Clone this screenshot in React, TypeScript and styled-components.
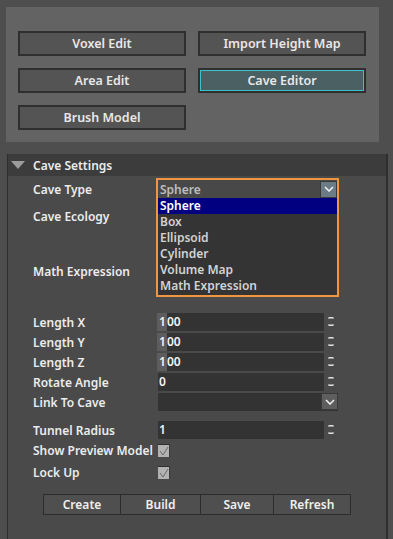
import { createGlobalStyle } from 'styled-components'
import styled from 'styled-components'

const GlobalStyle = createGlobalStyle`
    html, body {
        margin: 0;
        padding: 0;
        background: #4e4e4e;
    }
    body {
        font-family: "Noto Sans", "DejaVu Sans", sans-serif;
        font-size: 12px;
        color: #e6e6e6;
    }
`

const Page = styled.div`
    width: 393px;
    height: 539px;
    overflow: hidden;
    box-sizing: border-box;
    padding: 7px 0 0 6px;
`

const TopPanel = styled.div`
    width: 373px;
    height: 135px;
    box-sizing: border-box;
    padding: 24px 0 0 12px;
    background: #636363;
`

const ButtonGrid = styled.div`
    display: grid;
    grid-template-columns: 168px 168px;
    grid-auto-rows: 25px;
    column-gap: 12px;
    row-gap: 12px;
`

const ToolButton = styled.button<{ $active?: boolean }>`
    box-sizing: border-box;
    margin: 0;
    padding: 0;
    font-family: inherit;
    font-size: 12.5px;
    font-weight: 600;
    color: #e8e8e8;
    background: ${p => (p.$active ? '#4a6062' : '#545454')};
    border: 2px solid #2f2f2f;
    box-shadow: ${p => (p.$active ? 'inset 0 0 0 1px #3ac3c8' : 'none')};
    cursor: pointer;
`

const Section = styled.div`
    margin: 12px 0 0 1px;
    width: 381px;
    height: 385px;
    box-sizing: border-box;
    background: #4a4a4a;
    border-left: 1px solid #2e2e2e;
    border-right: 2px solid #2e2e2e;
`

const SectionHeader = styled.div`
    height: 22px;
    display: flex;
    align-items: center;
    gap: 8px;
    padding-left: 3px;
    background: #3c3c3c;
    font-size: 12px;
    font-weight: 600;
    color: #ececec;
`

const SectionBody = styled.div`
    padding: 4px 0 0 25px;
`

const Row = styled.div<{ $h: number; $mt?: number }>`
    display: grid;
    grid-template-columns: 125px 180px;
    align-items: center;
    height: ${p => p.$h}px;
    margin-top: ${p => p.$mt ?? 0}px;
`

const Label = styled.div`
    font-size: 12px;
    font-weight: 600;
    color: #ececec;
    white-space: nowrap;
`

const Cell = styled.div`
    position: relative;
    height: 100%;
    display: flex;
    align-items: center;
`

const SpinBox = styled.div`
    display: flex;
    align-items: center;
    height: 18px;
    gap: 3px;
`

const Field = styled.div`
    width: 166px;
    height: 18px;
    box-sizing: border-box;
    padding-left: 1px;
    background: #333333;
    font-size: 12px;
    font-weight: 600;
    color: #f4f4f4;
    line-height: 18px;
`

const Caret = styled.span`
    display: inline-block;
    background: #5d5d5d;
    padding: 0 1px 0 2px;
    margin-left: -2px;
`

const Combo = styled.div`
    width: 180px;
    height: 18px;
    box-sizing: border-box;
    display: flex;
    justify-content: flex-end;
    background: #333333;
`

const ArrowBox = styled.div<{ $bg: string }>`
    width: 17px;
    height: 17px;
    box-sizing: border-box;
    display: flex;
    align-items: center;
    justify-content: center;
    background: ${p => p.$bg};
    border: 1px solid #3a3a3a;
`

const Popup = styled.div`
    position: absolute;
    top: -2px;
    left: -2px;
    width: 183px;
    height: 119px;
    box-sizing: border-box;
    border: 2px solid #f3953e;
    background: #343434;
    z-index: 2;
`

const PopupHead = styled.div`
    height: 18px;
    display: flex;
    align-items: center;
    justify-content: space-between;
    padding-left: 2px;
    background: #484848;
    font-size: 12px;
    font-weight: 600;
    color: #bdbdbd;
`

const Option = styled.div<{ $selected?: boolean }>`
    height: 16px;
    line-height: 16px;
    padding-left: 2px;
    font-size: 12px;
    font-weight: 600;
    color: ${p => (p.$selected ? '#ffffff' : '#d2d2d2')};
    background: ${p => (p.$selected ? '#000080' : 'transparent')};
`

const Check = styled.div`
    width: 12px;
    height: 13px;
    box-sizing: border-box;
    background: #b2b2b2;
    border-top: 1px solid #2e2e2e;
    border-right: 1px solid #3a3a3a;
    display: flex;
    align-items: center;
    justify-content: center;
`

const ActionBar = styled.div`
    display: flex;
    margin: 13px 0 0 10px;
    width: 308px;
    height: 21px;
    box-sizing: border-box;
    border: 1px solid #2c2c2c;
    background: #4f4f4f;
`

const ActionButton = styled.button<{ $w: number }>`
    width: ${p => p.$w}px;
    margin: 0;
    padding: 0;
    border: none;
    border-left: 1px solid #2c2c2c;
    background: transparent;
    font-family: inherit;
    font-size: 12px;
    font-weight: 600;
    color: #f0f0f0;
    &:first-child {
        border-left: none;
    }
`

function Chevron() {
    return (
        <svg width="10" height="6" viewBox="0 0 10 6">
            <path d="M1 1 L5 5 L9 1" fill="none" stroke="#f4f4f4" strokeWidth="1.5" />
        </svg>
    )
}

function Spinner() {
    return (
        <svg width="8" height="18" viewBox="0 0 8 18">
            <path d="M2 4 L6 4 L7 5 L1 5 Z" fill="#e0e0e0" />
            <path d="M1 12 L7 12 L6 13 L2 13 Z" fill="#e0e0e0" />
            <rect x="1" y="5" width="6" height="1" fill="#9a9a9a" />
            <rect x="1" y="11" width="6" height="1" fill="#9a9a9a" />
        </svg>
    )
}

function SpinField({ value, caret }: { value: string; caret?: boolean }) {
    return (
        <SpinBox>
            <Field>
                {caret ? (
                    <>
                        <Caret>{value[0]}</Caret>
                        {value.slice(1)}
                    </>
                ) : (
                    value
                )}
            </Field>
            <Spinner />
        </SpinBox>
    )
}

function CheckBox() {
    return (
        <Check>
            <svg width="10" height="10" viewBox="0 0 10 10">
                <path d="M1 5 L4 9 L9 1" fill="none" stroke="#6a6a6a" strokeWidth="1" />
            </svg>
        </Check>
    )
}

const CAVE_TYPES = ['Sphere', 'Box', 'Ellipsoid', 'Cylinder', 'Volume Map', 'Math Expression']

const ACTIONS: [string, number][] = [
    ['Create', 76],
    ['Build', 80],
    ['Save', 73],
    ['Refresh', 77],
]

export default function App() {
    return (
        <Page>
            <GlobalStyle />
            <TopPanel>
                <ButtonGrid>
                    <ToolButton>Voxel Edit</ToolButton>
                    <ToolButton>Import Height Map</ToolButton>
                    <ToolButton>Area Edit</ToolButton>
                    <ToolButton $active>Cave Editor</ToolButton>
                    <ToolButton>Brush Model</ToolButton>
                </ButtonGrid>
            </TopPanel>
            <Section>
                <SectionHeader>
                    <svg width="14" height="8" viewBox="0 0 14 8">
                        <path d="M0 0 L14 0 L7 8 Z" fill="#9c9c9c" />
                    </svg>
                    Cave Settings
                </SectionHeader>
                <SectionBody>
                    <Row $h={18}>
                        <Label>Cave Type</Label>
                        <Cell>
                            <Popup>
                                <PopupHead>
                                    Sphere
                                    <ArrowBox $bg="#6b7c87">
                                        <Chevron />
                                    </ArrowBox>
                                </PopupHead>
                                {CAVE_TYPES.map((t, i) => (
                                    <Option key={t} $selected={i === 0}>
                                        {t}
                                    </Option>
                                ))}
                            </Popup>
                        </Cell>
                    </Row>
                    <Row $h={36}>
                        <Label>Cave Ecology</Label>
                        <Cell />
                    </Row>
                    <Row $h={75}>
                        <Label>Math Expression</Label>
                        <Cell />
                    </Row>
                    <Row $h={18} $mt={4}>
                        <Label>Length X</Label>
                        <Cell><SpinField value="100" caret /></Cell>
                    </Row>
                    <Row $h={18} $mt={2}>
                        <Label>Length Y</Label>
                        <Cell><SpinField value="100" caret /></Cell>
                    </Row>
                    <Row $h={18} $mt={2}>
                        <Label>Length Z</Label>
                        <Cell><SpinField value="100" caret /></Cell>
                    </Row>
                    <Row $h={18} $mt={2}>
                        <Label>Rotate Angle</Label>
                        <Cell><SpinField value="0" /></Cell>
                    </Row>
                    <Row $h={18} $mt={2}>
                        <Label>Link To Cave</Label>
                        <Cell>
                            <Combo>
                                <ArrowBox $bg="#5e5e5e">
                                    <Chevron />
                                </ArrowBox>
                            </Combo>
                        </Cell>
                    </Row>
                    <Row $h={18} $mt={10}>
                        <Label>Tunnel Radius</Label>
                        <Cell><SpinField value="1" /></Cell>
                    </Row>
                    <Row $h={18} $mt={2}>
                        <Label>Show Preview Model</Label>
                        <Cell><CheckBox /></Cell>
                    </Row>
                    <Row $h={18} $mt={4}>
                        <Label>Lock Up</Label>
                        <Cell><CheckBox /></Cell>
                    </Row>
                    <ActionBar>
                        {ACTIONS.map(([name, w]) => (
                            <ActionButton key={name} $w={w}>
                                {name}
                            </ActionButton>
                        ))}
                    </ActionBar>
                </SectionBody>
            </Section>
        </Page>
    )
}
